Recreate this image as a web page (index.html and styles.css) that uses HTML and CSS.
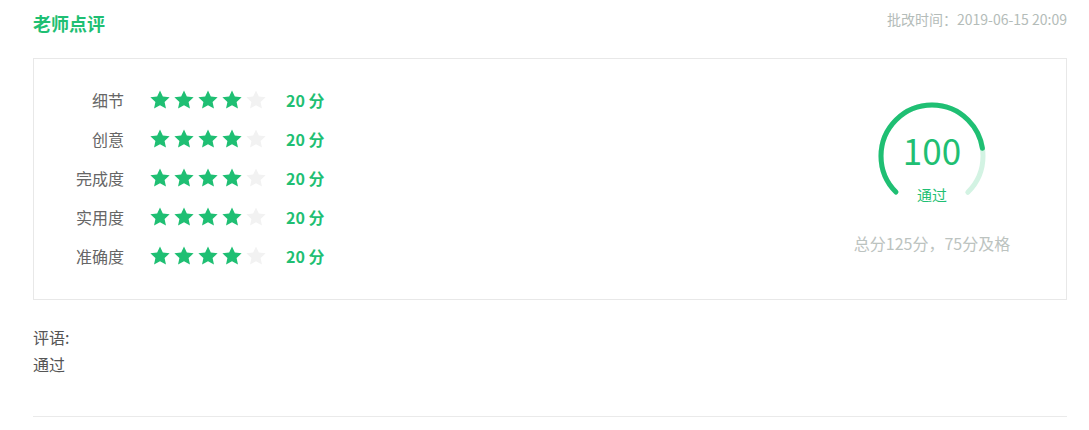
FILE: index.html
```html
<!DOCTYPE html>
<html lang="zh-CN">
<head>
  <meta charset="UTF-8" />
  <title>老师点评</title>
  <link rel="stylesheet" href="styles.css">
</head>
<body>
  <div class="review">
    <div class="review-head">
      <h2 class="review-title">老师点评</h2>
      <span class="review-time">批改时间：2019-06-15 20:09</span>
    </div>

    <div class="score-box">
      <div class="score-rows">
        <div class="score-row">
          <span class="label">细节</span>
          <span class="stars">
            <svg viewBox="0 0 24 24"><polygon class="on" points="12,1.5 15.1,8.3 22.5,9.1 17,14.1 18.5,21.4 12,17.7 5.5,21.4 7,14.1 1.5,9.1 8.9,8.3"/></svg>
            <svg viewBox="0 0 24 24"><polygon class="on" points="12,1.5 15.1,8.3 22.5,9.1 17,14.1 18.5,21.4 12,17.7 5.5,21.4 7,14.1 1.5,9.1 8.9,8.3"/></svg>
            <svg viewBox="0 0 24 24"><polygon class="on" points="12,1.5 15.1,8.3 22.5,9.1 17,14.1 18.5,21.4 12,17.7 5.5,21.4 7,14.1 1.5,9.1 8.9,8.3"/></svg>
            <svg viewBox="0 0 24 24"><polygon class="on" points="12,1.5 15.1,8.3 22.5,9.1 17,14.1 18.5,21.4 12,17.7 5.5,21.4 7,14.1 1.5,9.1 8.9,8.3"/></svg>
            <svg viewBox="0 0 24 24"><polygon class="off" points="12,1.5 15.1,8.3 22.5,9.1 17,14.1 18.5,21.4 12,17.7 5.5,21.4 7,14.1 1.5,9.1 8.9,8.3"/></svg>
          </span>
          <span class="points">20 分</span>
        </div>
        <div class="score-row">
          <span class="label">创意</span>
          <span class="stars">
            <svg viewBox="0 0 24 24"><polygon class="on" points="12,1.5 15.1,8.3 22.5,9.1 17,14.1 18.5,21.4 12,17.7 5.5,21.4 7,14.1 1.5,9.1 8.9,8.3"/></svg>
            <svg viewBox="0 0 24 24"><polygon class="on" points="12,1.5 15.1,8.3 22.5,9.1 17,14.1 18.5,21.4 12,17.7 5.5,21.4 7,14.1 1.5,9.1 8.9,8.3"/></svg>
            <svg viewBox="0 0 24 24"><polygon class="on" points="12,1.5 15.1,8.3 22.5,9.1 17,14.1 18.5,21.4 12,17.7 5.5,21.4 7,14.1 1.5,9.1 8.9,8.3"/></svg>
            <svg viewBox="0 0 24 24"><polygon class="on" points="12,1.5 15.1,8.3 22.5,9.1 17,14.1 18.5,21.4 12,17.7 5.5,21.4 7,14.1 1.5,9.1 8.9,8.3"/></svg>
            <svg viewBox="0 0 24 24"><polygon class="off" points="12,1.5 15.1,8.3 22.5,9.1 17,14.1 18.5,21.4 12,17.7 5.5,21.4 7,14.1 1.5,9.1 8.9,8.3"/></svg>
          </span>
          <span class="points">20 分</span>
        </div>
        <div class="score-row">
          <span class="label">完成度</span>
          <span class="stars">
            <svg viewBox="0 0 24 24"><polygon class="on" points="12,1.5 15.1,8.3 22.5,9.1 17,14.1 18.5,21.4 12,17.7 5.5,21.4 7,14.1 1.5,9.1 8.9,8.3"/></svg>
            <svg viewBox="0 0 24 24"><polygon class="on" points="12,1.5 15.1,8.3 22.5,9.1 17,14.1 18.5,21.4 12,17.7 5.5,21.4 7,14.1 1.5,9.1 8.9,8.3"/></svg>
            <svg viewBox="0 0 24 24"><polygon class="on" points="12,1.5 15.1,8.3 22.5,9.1 17,14.1 18.5,21.4 12,17.7 5.5,21.4 7,14.1 1.5,9.1 8.9,8.3"/></svg>
            <svg viewBox="0 0 24 24"><polygon class="on" points="12,1.5 15.1,8.3 22.5,9.1 17,14.1 18.5,21.4 12,17.7 5.5,21.4 7,14.1 1.5,9.1 8.9,8.3"/></svg>
            <svg viewBox="0 0 24 24"><polygon class="off" points="12,1.5 15.1,8.3 22.5,9.1 17,14.1 18.5,21.4 12,17.7 5.5,21.4 7,14.1 1.5,9.1 8.9,8.3"/></svg>
          </span>
          <span class="points">20 分</span>
        </div>
        <div class="score-row">
          <span class="label">实用度</span>
          <span class="stars">
            <svg viewBox="0 0 24 24"><polygon class="on" points="12,1.5 15.1,8.3 22.5,9.1 17,14.1 18.5,21.4 12,17.7 5.5,21.4 7,14.1 1.5,9.1 8.9,8.3"/></svg>
            <svg viewBox="0 0 24 24"><polygon class="on" points="12,1.5 15.1,8.3 22.5,9.1 17,14.1 18.5,21.4 12,17.7 5.5,21.4 7,14.1 1.5,9.1 8.9,8.3"/></svg>
            <svg viewBox="0 0 24 24"><polygon class="on" points="12,1.5 15.1,8.3 22.5,9.1 17,14.1 18.5,21.4 12,17.7 5.5,21.4 7,14.1 1.5,9.1 8.9,8.3"/></svg>
            <svg viewBox="0 0 24 24"><polygon class="on" points="12,1.5 15.1,8.3 22.5,9.1 17,14.1 18.5,21.4 12,17.7 5.5,21.4 7,14.1 1.5,9.1 8.9,8.3"/></svg>
            <svg viewBox="0 0 24 24"><polygon class="off" points="12,1.5 15.1,8.3 22.5,9.1 17,14.1 18.5,21.4 12,17.7 5.5,21.4 7,14.1 1.5,9.1 8.9,8.3"/></svg>
          </span>
          <span class="points">20 分</span>
        </div>
        <div class="score-row">
          <span class="label">准确度</span>
          <span class="stars">
            <svg viewBox="0 0 24 24"><polygon class="on" points="12,1.5 15.1,8.3 22.5,9.1 17,14.1 18.5,21.4 12,17.7 5.5,21.4 7,14.1 1.5,9.1 8.9,8.3"/></svg>
            <svg viewBox="0 0 24 24"><polygon class="on" points="12,1.5 15.1,8.3 22.5,9.1 17,14.1 18.5,21.4 12,17.7 5.5,21.4 7,14.1 1.5,9.1 8.9,8.3"/></svg>
            <svg viewBox="0 0 24 24"><polygon class="on" points="12,1.5 15.1,8.3 22.5,9.1 17,14.1 18.5,21.4 12,17.7 5.5,21.4 7,14.1 1.5,9.1 8.9,8.3"/></svg>
            <svg viewBox="0 0 24 24"><polygon class="on" points="12,1.5 15.1,8.3 22.5,9.1 17,14.1 18.5,21.4 12,17.7 5.5,21.4 7,14.1 1.5,9.1 8.9,8.3"/></svg>
            <svg viewBox="0 0 24 24"><polygon class="off" points="12,1.5 15.1,8.3 22.5,9.1 17,14.1 18.5,21.4 12,17.7 5.5,21.4 7,14.1 1.5,9.1 8.9,8.3"/></svg>
          </span>
          <span class="points">20 分</span>
        </div>
      </div>

      <div class="total">
        <div class="gauge">
          <svg viewBox="0 0 110 110" width="110" height="110">
            <circle class="track" cx="55" cy="55" r="51" stroke-dasharray="240.3 320.4" transform="rotate(135 55 55)"/>
            <circle class="bar" cx="55" cy="55" r="51" stroke-dasharray="192.2 320.4" transform="rotate(135 55 55)"/>
          </svg>
          <span class="gauge-num">100</span>
          <span class="gauge-tag">通过</span>
        </div>
        <p class="total-note">总分125分，75分及格</p>
      </div>
    </div>

    <div class="comment">
      <p>评语:</p>
      <p>通过</p>
    </div>
  </div>
</body>
</html>
```

FILE: styles.css
```css
body {
  margin: 0;
  font-family: "Noto Sans CJK SC", "Liberation Sans", sans-serif;
  background: #fff;
  color: #555;
}

.review {
  padding: 0 22px 0 33px;
}

.review-head {
  display: flex;
  justify-content: space-between;
  height: 58px;
}

.review-title {
  margin: 0;
  padding-top: 10px;
  font-size: 18px;
  line-height: 26px;
  font-weight: bold;
  color: #1fbf73;
}

.review-time {
  padding-top: 9px;
  font-size: 14px;
  line-height: 20px;
  color: #b4bcb9;
}

.score-box {
  display: flex;
  align-items: center;
  justify-content: space-between;
  border: 1px solid #e8e8e8;
  padding: 21px 24px 24px 24px;
}

.score-row {
  display: flex;
  align-items: center;
  height: 39px;
}

.label {
  width: 66px;
  text-align: right;
  font-size: 16px;
  color: #666;
}

.stars {
  display: flex;
  gap: 2px;
  margin-left: 25px;
}

.stars svg {
  width: 22px;
  height: 22px;
}

.stars .on {
  fill: #1fbf73;
}

.stars .off {
  fill: #f2f2f2;
}

.points {
  margin-left: 19px;
  font-size: 16px;
  font-weight: bold;
  color: #1fbf73;
}

.total {
  width: 220px;
  display: flex;
  flex-direction: column;
  align-items: center;
}

.gauge {
  position: relative;
  width: 110px;
  height: 110px;
}

.gauge svg {
  display: block;
}

.gauge circle {
  fill: none;
  stroke-width: 5;
  stroke-linecap: round;
}

.gauge .track {
  stroke: #d3f3e3;
}

.gauge .bar {
  stroke: #1fbf73;
}

.gauge-num {
  position: absolute;
  left: 0;
  right: 0;
  top: 27px;
  text-align: center;
  font-size: 35px;
  line-height: 44px;
  color: #1fbf73;
}

.gauge-tag {
  position: absolute;
  left: 0;
  right: 0;
  top: 84px;
  text-align: center;
  font-size: 15px;
  line-height: 20px;
  color: #1fbf73;
}

.total-note {
  margin: 21px 0 0;
  font-size: 16px;
  line-height: 22px;
  color: #bcc3c0;
}

.comment {
  padding: 24px 0 38px;
  border-bottom: 1px solid #eaeaea;
}

.comment p {
  margin: 0;
  font-size: 16px;
  line-height: 27px;
  color: #555;
}
```
